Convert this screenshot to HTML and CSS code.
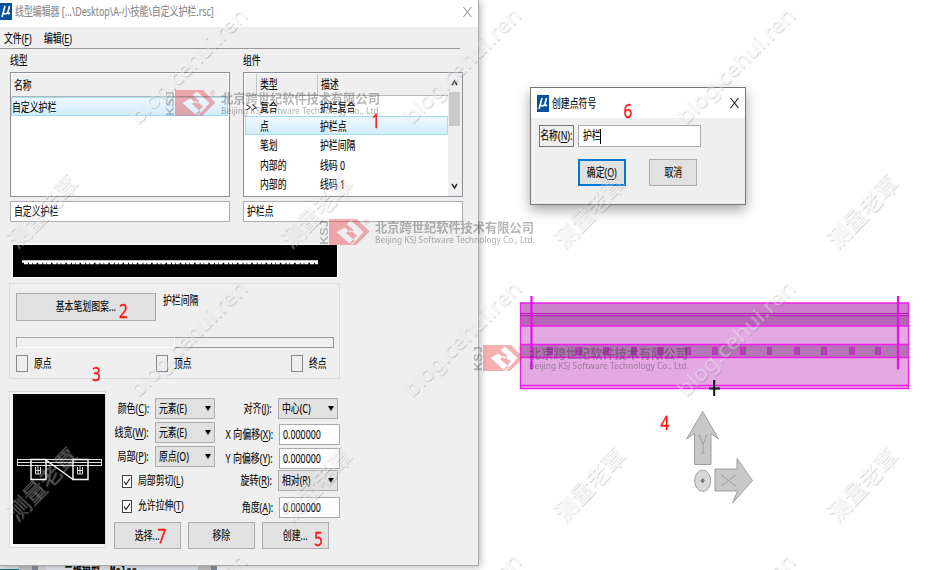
FILE: index.html
```html
<!DOCTYPE html>
<html lang="zh-CN">
<head>
<meta charset="utf-8">
<title>线型编辑器</title>
<link rel="stylesheet" href="styles.css">
</head>
<body>
<div class="desktop">
  <svg class="canvas" width="930" height="570" viewBox="0 0 930 570">
    <rect x="520" y="303" width="389" height="12" fill="#cc80cc"/>
    <rect x="520" y="315" width="389" height="11" fill="#b766b7"/>
    <rect x="520" y="326" width="389" height="19" fill="#e3a9e3"/>
    <rect x="520" y="345" width="389" height="13" fill="#b574b5"/>
    <rect x="520" y="358" width="389" height="31" fill="#e3a9e3"/>
    <path d="M520.5 302v87M908.5 302v87M520 303h389M520 326h389M520 344.5h389M520 357.5h389M520 385.5h389M520 388.5h389" fill="none" stroke="#f01cf0" stroke-width="1.3"/>
    <path d="M520 313.5h389M520 315.5h389" stroke="#b016b0"/>
    <path d="M531.5 296v73.500M898 296v73.500" stroke="#e411e4" stroke-width="2.200"/>
    <g fill="#9d509d" stroke="#cf27cf">
      <rect x="547.500" y="347.500" width="5" height="7"/><rect x="576.500" y="347.500" width="5" height="7"/><rect x="603.500" y="347.500" width="5" height="7"/><rect x="631.500" y="347.500" width="5" height="7"/><rect x="658.500" y="347.500" width="5" height="7"/><rect x="685.500" y="347.500" width="5" height="7"/><rect x="712.500" y="347.500" width="5" height="7"/><rect x="740.500" y="347.500" width="5" height="7"/><rect x="767.500" y="347.500" width="4" height="7"/><rect x="794.500" y="347.500" width="5" height="7"/><rect x="821.500" y="347.500" width="5" height="7"/><rect x="849.500" y="347.500" width="5" height="7"/><rect x="875.500" y="347.500" width="5" height="7"/>
    </g>
    <path d="M714.200 380v16M709 388.500h11" stroke="#111" stroke-width="2"/>
    <g fill="#c8c8c8" stroke="#9f9f9f">
      <path d="M702.800 411.500 718.500 439l-7.500-5.500v31H694.500v-31L686.500 439z"/>
      <path d="M715 469h22v-10.500L752.500 480.500 732.500 503l5-12H715z"/>
      <ellipse cx="702.700" cy="480.700" rx="8" ry="10.700" fill="#d8d8d8"/>
      <path d="M702.700 478.500l1.500 2.200-1.500 2.200-1.500-2.200z" fill="#777" stroke="#777"/>
      <path d="M699.500 435.500l3.500 9 3.500-9M703 444.500v8.500M698.500 435.500h2M705.500 435.500h2M701 453h4M722 475.500l13 10M722 485.500l13-10M722 474.500v2M735 474.500v2M722 484.500v2M735 484.500v2" fill="none"/>
    </g>
  </svg>

  <div class="behind"><i class="teal"></i><i class="gap"></i><i class="grip"></i><div class="pane"><span class="cut">二维模型</span><span class="cut latin">Malac</span></div><i class="gap right"></i><i class="grip"></i></div>

  <section class="window editor">
    <header class="titlebar">
      <svg class="logo" width="12" height="17" viewBox="0 0 12 17"><rect width="12" height="17" fill="#07519a"/><path d="M5 3 2 14M4 10q1.500 2.500 4-1L9.500 3M8 8q-1 4 2 2" fill="none" stroke="#fff" stroke-width="1.600"/></svg>
      <span class="t">线型编辑器 [...\Desktop\A-小技能\自定义护栏.rsc]</span>
      <svg class="close" width="9" height="12" viewBox="0 0 9 12"><path d="M.5 1l8 10M8.500 1l-8 10" fill="none" stroke="#888"/></svg>
    </header>
    <nav class="menu"><span class="t">文件(<u>F</u>)</span><span class="t">编辑(<u>E</u>)</span></nav>
    <div class="lists">
      <div class="col left">
        <div class="caption"><span class="t">线型</span></div>
        <div class="list">
          <div class="head"><span class="t">名称</span></div>
          <div class="row selected"><span class="t">自定义护栏</span></div>
        </div>
        <div class="field"><span class="t">自定义护栏</span></div>
      </div>
      <div class="col rightcol">
        <div class="caption"><span class="t">组件</span></div>
        <div class="list split">
          <div class="rows">
            <div class="head grid"><i></i><b><span class="t">类型</span></b><b><span class="t">描述</span></b></div>
            <div class="row grid"><span class="t mark">&gt;&gt;</span><span class="t">复合</span><span class="t">护栏复合</span></div>
            <div class="row grid selected"><i></i><span class="t">点</span><span class="t">护栏点</span></div>
            <div class="row grid"><i></i><span class="t">笔划</span><span class="t">护栏间隔</span></div>
            <div class="row grid"><i></i><span class="t">内部的</span><span class="t">线码 0</span></div>
            <div class="row grid"><i></i><span class="t">内部的</span><span class="t">线码 1</span></div>
          </div>
          <div class="scroll">
            <svg width="11" height="19" viewBox="0 0 11 19"><path d="M3 12l2.500-4 2.500 4" fill="none" stroke="#333" stroke-width="1.500"/></svg>
            <i class="thumb"></i>
            <svg width="11" height="19" viewBox="0 0 11 19"><path d="M3 7l2.500 4L8 7" fill="none" stroke="#333" stroke-width="1.500"/></svg>
          </div>
        </div>
        <div class="field"><span class="t">护栏点</span></div>
      </div>
    </div>
    <svg class="strip" width="324" height="32" viewBox="0 0 324 32"><rect width="324" height="32" fill="#000"/><path d="M9 16.500h296" stroke="#fff" stroke-width="2.400"/><path d="M11 18.200h294" stroke="#fff" stroke-width="2.200" stroke-dasharray="4 1 3 .7 4 1.600"/></svg>
    <div class="group">
      <div class="stroke-row"><div class="btn wide"><span class="c">基本笔划图案...</span></div><span class="t">护栏间隔</span></div>
      <div class="progress"><i></i><b></b></div>
      <div class="checks"><label><i class="box"></i><span class="t">原点</span></label><label><i class="box"></i><span class="t">顶点</span></label><label><i class="box"></i><span class="t">终点</span></label></div>
    </div>
    <div class="bottom">
      <div class="preview">
        <svg width="92" height="150" viewBox="0 0 92 150"><rect width="92" height="150" fill="#000"/><g fill="none" stroke="#ddd"><path d="M4 65.500h85M4 68.500h85M4 71.500h85M4.500 65v7M88.500 65v7"/><path d="M18 65.500h15v20H18zM60 65.500h15v20H60zM33 66l27 19.500" stroke="#fff" stroke-width="1.400"/><path d="M22.500 73v7h5v-7M22 76.500h6M25 72v8M64.500 73v7h5v-7M64 76.500h6M67 72v8"/></g></svg>
      </div>
      <div class="form">
        <div class="fields">
          <div class="fcol one">
            <div class="line"><span class="r">颜色(<u>C</u>):</span><div class="combo"><span class="t">元素(E)</span><i></i></div></div>
            <div class="line"><span class="r">线宽(<u>W</u>):</span><div class="combo"><span class="t">元素(E)</span><i></i></div></div>
            <div class="line"><span class="r">局部(<u>P</u>):</span><div class="combo"><span class="t">原点(O)</span><i></i></div></div>
            <div class="tick"><svg width="10" height="13" viewBox="0 0 10 13"><rect x=".5" y=".5" width="9" height="12" fill="#fff" stroke="#444"/><path d="M2 6.500l2 3 4-6" fill="none" stroke="#222" stroke-width="1.200"/></svg><span class="t">局部剪切(<u>L</u>)</span></div>
            <div class="tick"><svg width="10" height="13" viewBox="0 0 10 13"><rect x=".5" y=".5" width="9" height="12" fill="#fff" stroke="#444"/><path d="M2 6.500l2 3 4-6" fill="none" stroke="#222" stroke-width="1.200"/></svg><span class="t">允许拉伸(<u>T</u>)</span></div>
          </div>
          <div class="fcol two">
            <div class="line"><span class="r">对齐(<u>J</u>):</span><div class="combo"><span class="t">中心(C)</span><i></i></div></div>
            <div class="line in"><span class="r">X 向偏移(<u>X</u>):</span><div class="num"><span class="t">0.000000</span></div></div>
            <div class="line in"><span class="r">Y 向偏移(<u>Y</u>):</span><div class="num"><span class="t">0.000000</span></div></div>
            <div class="line"><span class="r">旋转(<u>R</u>):</span><div class="combo"><span class="t">相对(R)</span><i></i></div></div>
            <div class="line in"><span class="r">角度(<u>A</u>):</span><div class="num"><span class="t">0.000000</span></div></div>
          </div>
        </div>
        <div class="actions"><div class="btn"><span class="c">选择...</span></div><div class="btn"><span class="c">移除</span></div><div class="btn"><span class="c">创建...</span></div></div>
      </div>
    </div>
  </section>

  <section class="window dialog">
    <header class="titlebar">
      <svg class="logo" width="12" height="17" viewBox="0 0 12 17"><rect width="12" height="17" fill="#07519a"/><path d="M5 3 2 14M4 10q1.500 2.500 4-1L9.500 3M8 8q-1 4 2 2" fill="none" stroke="#fff" stroke-width="1.600"/></svg>
      <span class="t">创建点符号</span>
      <svg class="close" width="9" height="12" viewBox="0 0 9 12"><path d="M.5 1l8 10M8.500 1l-8 10" fill="none" stroke="#222" stroke-width="1.200"/></svg>
    </header>
    <div class="name"><div class="key"><span class="c">名称(<u>N</u>):</span></div><div class="entry"><span class="t">护栏</span><i class="caret"></i></div></div>
    <div class="answer"><div class="btn primary"><span class="c">确定(<u>O</u>)</span></div><div class="btn"><span class="c">取消</span></div></div>
  </section>

  <svg class="overlay" width="930" height="570" viewBox="0 0 930 570">
    <defs>
      <filter id="emboss" x="-10%" y="-50%" width="120%" height="200%"><feDropShadow dx=".8" dy=".9" stdDeviation=".4" flood-color="#444" flood-opacity=".8"/></filter>
      <g id="brand">
        <text class="ksj" transform="translate(174 116) rotate(-90)" textLength="25" lengthAdjust="spacingAndGlyphs">KSJ</text>
        <path fill="#e0222c" fill-rule="evenodd" d="M175 90h28l12.500 12.500L202 116h-27zM182.500 103l14 12.500 4.500-3.500-9-8 4-3 7 5.500-7.500 8 2.500 1.500 11.500-13-12.500-11.500-4.500 3.500 7 6-3 2.500-6-5z"/>
        <text class="reg" x="210" y="96">®</text>
        <text class="cn" x="221" y="103" textLength="159" lengthAdjust="spacingAndGlyphs">北京跨世纪软件技术有限公司</text>
        <text class="en" x="221" y="114" textLength="160" lengthAdjust="spacingAndGlyphs">Beijing KSJ Software Technology Co., Ltd.</text>
      </g>
      <text id="site" class="site" transform="translate(138 125) rotate(-44.500)" textLength="155" lengthAdjust="spacingAndGlyphs">blog.cehui.ren</text>
      <text id="author" class="author" transform="translate(17 249) rotate(-46)" textLength="90" lengthAdjust="spacingAndGlyphs">测量老覃</text>
    </defs>
    <g opacity=".36"><use href="#brand"/><use href="#brand" x="154" y="129"/><use href="#brand" x="308" y="255"/></g>
    <g class="marks" filter="url(#emboss)">
      <use href="#site"/><use href="#site" x="274"/><use href="#site" x="548"/>
      <use href="#site" y="273"/><use href="#site" x="274" y="273"/><use href="#site" x="548" y="273"/>
      <use href="#site" y="546"/><use href="#site" x="274" y="546"/><use href="#site" x="548" y="546"/>
      <use href="#author"/><use href="#author" x="274"/><use href="#author" x="547"/><use href="#author" x="820"/>
      <use href="#author" y="273"/><use href="#author" x="274" y="273"/><use href="#author" x="547" y="273"/><use href="#author" x="820" y="273"/>
    </g>
    <g class="steps">
      <text transform="translate(371.500 128) scale(.76 1)">1</text><text transform="translate(119 318) scale(.76 1)">2</text><text transform="translate(92 381) scale(.76 1)">3</text><text transform="translate(660.500 430) scale(.76 1)">4</text><text transform="translate(314 546) scale(.76 1)">5</text><text transform="translate(623.500 118) scale(.76 1)">6</text><text transform="translate(157.500 543) scale(.76 1)">7</text>
    </g>
  </svg>
</div>
</body>
</html>
```
FILE: styles.css
```css
* { box-sizing: border-box; }
body { margin: 0; background: #fff; color: #0a0a0a; font: 12.3px/16px "Noto Sans", "Noto Sans CJK SC", sans-serif; -webkit-text-stroke: .12px; }
i, b { font-style: normal; font-weight: inherit; display: block; }
u { text-underline-offset: 2px; }
.desktop { position: relative; width: 930px; height: 570px; overflow: hidden; }
.canvas, .overlay { position: absolute; left: 0; top: 0; }
.overlay { pointer-events: none; }

/* condensed UI text, anchored left / centre / right */
.t, .c, .r { display: inline-block; flex: none; white-space: nowrap; transform: scaleX(.72); transform-origin: 0 50%; }
.c { transform-origin: 50% 50%; }
.r { transform-origin: 100% 50%; transform: scaleX(.73); }

.window { position: absolute; background: #efefef; }
.editor { left: 0; top: 0; width: 479px; height: 565.500px; border-right: 1px solid #aaa; border-bottom: 1px solid #aaa; box-shadow: 1px 1px 8px rgba(0,0,0,.3); }
.dialog { left: 530px; top: 87px; width: 216px; height: 118px; border: 1px solid #777; box-shadow: 0 5px 12px rgba(0,0,0,.35); }
.titlebar { display: flex; align-items: center; background: #fff; }
.editor .titlebar { height: 27px; padding: 0 6px 4px 0; color: #888; gap: 3px; }
.editor .titlebar .t { transform: scaleX(.724); }
.dialog .titlebar { height: 30px; padding: 0 6px 0 6px; gap: 3px; }
.dialog .titlebar .t { padding-top: 2px; }
.close { margin-left: auto; flex: none; }
.logo { flex: none; }

.menu { display: flex; height: 22px; width: 460px; align-items: center; padding: 3px 0 0 4px; border-bottom: 1px solid #999; }
.menu .t { width: 40px; }

.lists { display: flex; gap: 13px; padding-left: 10px; }
.left { width: 220px; }
.rightcol { width: 220px; }
.caption { height: 23px; padding-top: 4px; }
.list { height: 125px; border: 1px solid #8a8f98; background: #fff; }
.left .list { padding: 1px; }
.head { height: 23px; background: #efefef; border-bottom: 1px solid #b5b5b5; display: flex; align-items: center; padding: 2px 0 0 2px; }
.row { height: 19.200px; display: flex; align-items: center; border: 1px solid transparent; }
.selected { background: linear-gradient(#eef8fe, #d3edfb); border-color: #9fdcf6; }
.left .row { padding-top: 2px; margin-left: -1px; }
.split { display: flex; }
.rows { width: 204px; padding: 1px 0 0 1px; }
.grid { display: grid; grid-template-columns: 14px 60px 1fr; padding: 2px 0 0; align-items: center; }
.rows .head { grid-template-columns: 11px 61px 1fr; height: 22px; padding-top: 0; }
.rows .head b { border-left: 1px solid #c5c5c5; padding: 3px 0 0 3px; height: 21px; }
.rows .head + .row { margin-top: 1px; }
.mark { letter-spacing: 1px; }
.scroll { width: 14px; padding-right: 1px; background: #efefef; display: flex; flex-direction: column; align-items: center; }
.thumb { width: 11px; height: 34px; background: #cacaca; margin-bottom: auto; }
.field { margin-top: 4px; height: 21px; background: #fff; border: 1px solid #acacac; padding: 2px 0 0 3px; }

.strip { display: block; margin: 22.500px 0 0 13px; box-shadow: 0 0 0 1px #fff; }
.group { margin: 6.500px 0 0 9px; width: 331px; height: 96px; border: 1px solid #dcdcdc; padding: 9px 5px 0 6px; }
.stroke-row { display: flex; gap: 7px; }
.btn { display: flex; width: 67px; height: 27px; align-items: center; justify-content: center; background: #e1e1e1; border: 1px solid #adadad; }
.btn.wide { width: 140px; height: 28px; }
.progress { display: flex; width: 318px; height: 11px; margin-top: 16px; }
.progress i { width: 159px; border: 1px solid #aaa; border-right-color: #fff; border-bottom-color: #fff; }
.progress b { flex: 1; border: 1px solid #999; border-left: 0; }
.checks { display: grid; grid-template-columns: 140px 135px 1fr; margin-top: 7px; }
.checks label { display: flex; align-items: center; gap: 6px; }
.box { width: 12px; height: 17px; border: 1px solid #888; flex: none; }

.bottom { display: flex; gap: 8px; padding: 12px 0 0 9px; }
.preview { width: 97px; height: 157px; border: 1px solid #dcdcdc; padding: 3px 0 0 3px; background: #f5f5f5; }
.preview svg { display: block; width: 92px; height: 150px; margin-top: -1px; }
.form { padding-top: 7px; }
.fields { display: flex; height: 124px; }
.fcol { display: flex; flex-direction: column; }
.one { width: 101px; gap: 3px; }
.two { width: 125px; gap: 3px; }
.line { display: flex; justify-content: flex-end; align-items: center; height: 21px; gap: 6px; }
.two .line { padding-right: 2px; }
.two .in { padding-right: 0; gap: 6px; }
.two .in:nth-child(2) { margin-top: 2px; }
.two .in:nth-child(5) { margin-top: 3px; }
.two .line:nth-child(4) { margin-top: -2px; }
.combo { display: flex; align-items: center; width: 60px; height: 21px; flex: none; background: #e1e1e1; border: 1px solid #adadad; padding: 0 3px 0 3px; }
.combo .t { width: 43px; }
.combo > i { border: 3px solid transparent; border-top: 5px solid #000; border-bottom: 0; margin-left: auto; }
.num { width: 61px; height: 21px; flex: none; background: #fff; border: 1px solid #aaa; padding: 2px 0 0 3px; }
.tick { display: flex; align-items: center; height: 22px; gap: 6px; padding-left: 8px; }
.actions { display: flex; gap: 7px; }

.name { display: flex; gap: 5px; margin: 7px 0 0 8px; }
.key { display: flex; width: 35px; height: 22px; align-items: center; justify-content: center; border: 1px solid #777; }
.entry { display: flex; align-items: center; width: 123px; height: 22px; background: #fff; border: 1px solid #aaa; padding-left: 4px; margin-left: -1px; }
.entry .t { width: 17px; }
.caret { width: 1px; height: 15px; background: #000; }
.answer { display: flex; gap: 23px; margin: 12px 0 0 47px; }
.answer .btn { width: 48px; height: 27px; }
.answer .primary { border: 2px solid #0078d7; }

.behind { position: absolute; left: 0; top: 564px; width: 217px; height: 6px; display: flex; background: #ddd; overflow: hidden; }
.teal { width: 19px; border-top: 5px solid #e5e5e5; background: #127a78; }
.gap { width: 13px; background: #c8c8c8; }
.grip { width: 6px; background: #8794a0; }
.pane { display: flex; width: 154px; margin-left: 8px; background: #e9eef4; padding-left: 18px; gap: 12px; }
.cut { font: 12px/16px "Liberation Mono", "Noto Sans CJK SC", monospace; font-weight: bold; transform: scaleX(.75); transform-origin: 0 0; white-space: nowrap; width: 34px; }

.overlay { -webkit-text-stroke: 0; }
.ksj { font: bold 11px "Liberation Sans", sans-serif; fill: #444; }
.reg { font: 7px "Liberation Sans", sans-serif; fill: #e0222c; }
.cn { font: bold 13px "Noto Sans CJK SC", sans-serif; fill: #333; }
.en { font: 500 8.800px "Noto Sans", sans-serif; fill: #333; }
.marks { opacity: .36; }
.site { font: 21px "Noto Sans", sans-serif; fill: #f2f2f2; }
.author { font: 22px "Noto Sans CJK SC", sans-serif; fill: #f2f2f2; }
.steps { font: 20px "Noto Sans", sans-serif; fill: #f11; stroke: #f11; stroke-width: .35px; }
```
